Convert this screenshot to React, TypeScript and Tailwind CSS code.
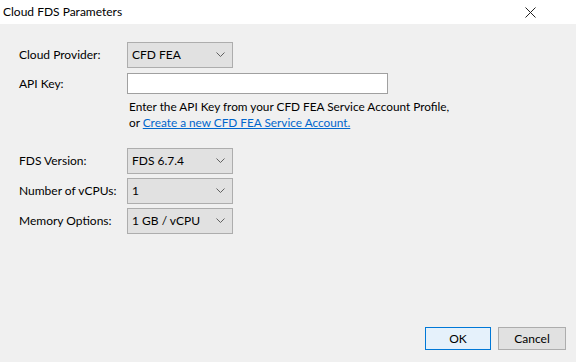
const Chevron = () => (
  <svg width="9" height="6" viewBox="0 0 9 6" className="text-[#606060]">
    <polyline points="0.5,0.5 4.5,4.5 8.5,0.5" fill="none" stroke="currentColor" strokeWidth="1" />
  </svg>
);

const Select = ({ value }: { value: string }) => (
  <div className="w-[106px] h-[26px] bg-[#e1e1e1] border border-[#adadad] flex items-center justify-between pl-[4px] pr-[7px]">
    <span>{value}</span>
    <Chevron />
  </div>
);

const Row = ({ label, children, className = '' }: { label: string; children: React.ReactNode; className?: string }) => (
  <div className={`flex items-center ${className}`}>
    <div className="w-[108px]">{label}</div>
    {children}
  </div>
);

export default function App() {
  return (
    <div className="w-[576px] h-[362px] bg-[#f0f0f0] flex flex-col text-[12px] text-black font-['Lato',sans-serif]">
      {/* title bar */}
      <div className="h-[24px] bg-white flex items-center justify-between pl-[3px] pr-[40px]">
        <span className="text-[12px]">Cloud FDS Parameters</span>
        <svg width="11" height="11" viewBox="0 0 11 11">
          <path d="M0.5 0.5 L10.5 10.5 M10.5 0.5 L0.5 10.5" stroke="#222" strokeWidth="1" />
        </svg>
      </div>

      <div className="flex-1 flex flex-col pl-[19px] pt-[18px]">
        <Row label="Cloud Provider:">
          <Select value="CFD FEA" />
        </Row>
        <Row label="API Key:" className="mt-[5px]">
          <div className="w-[261px] h-[21px] bg-white border border-[#a0a0a0]" />
        </Row>
        <div className="ml-[108px] mt-[5px] pl-[2px] leading-[16px] text-[11.8px]">
          <div>Enter the API Key from your CFD FEA Service Account Profile,</div>
          <div>
            or <a className="text-[#0066cc] underline">Create a new CFD FEA Service Account.</a>
          </div>
        </div>

        <Row label="FDS Version:" className="mt-[17px]">
          <Select value="FDS 6.7.4" />
        </Row>
        <Row label="Number of vCPUs:" className="mt-[4px]">
          <Select value="1" />
        </Row>
        <Row label="Memory Options:" className="mt-[4px]">
          <Select value="1 GB / vCPU" />
        </Row>
      </div>

      <div className="flex justify-end gap-[7px] pr-[10px] pb-[12px]">
        <button className="w-[66px] h-[23px] bg-[#e5f1fb] border border-[#0078d7]">OK</button>
        <button className="w-[68px] h-[23px] bg-[#e1e1e1] border border-[#adadad]">Cancel</button>
      </div>
    </div>
  );
}
